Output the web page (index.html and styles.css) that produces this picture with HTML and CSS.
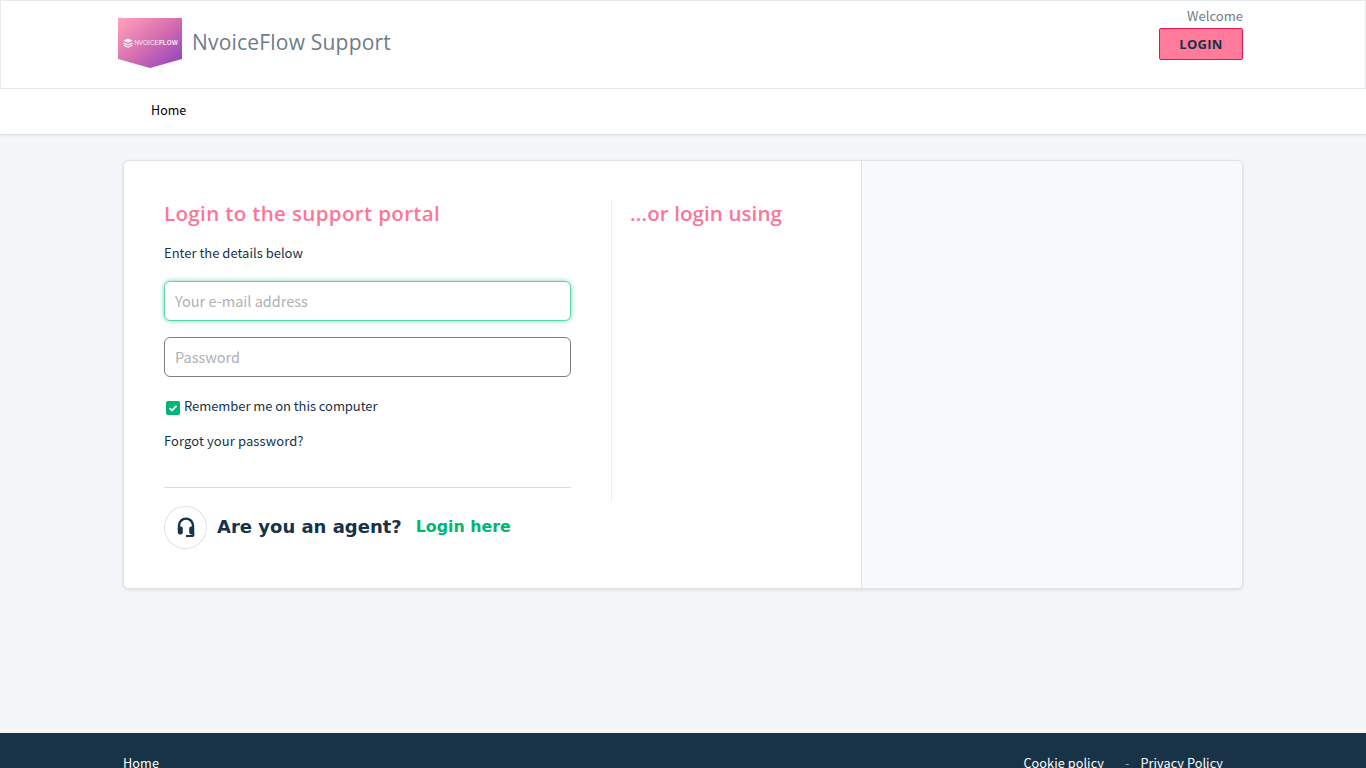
FILE: index.html
```html
<!DOCTYPE html>
<html lang="en">
<head>
<meta charset="utf-8">
<title>NvoiceFlow Support</title>
<link rel="stylesheet" href="styles.css">
</head>
<body>
<header class="topbar">
  <div class="brand">
    <div class="logo">
      <svg class="logo-mark" viewBox="0 0 10 10" width="10" height="10" aria-hidden="true">
        <path d="M5 0.5 9.5 2.6 5 4.7 0.5 2.6Z M0.5 4.3 5 6.4 9.5 4.3 9.5 5.4 5 7.5 0.5 5.4Z M0.5 6.6 5 8.7 9.5 6.6 9.5 7.7 5 9.8 0.5 7.7Z" fill="#fff"/>
      </svg>
      <span class="logo-text">NVOICE<b>FLOW</b></span>
    </div>
    <span class="brand-name">NvoiceFlow Support</span>
  </div>
  <div class="account">
    <span class="welcome">Welcome</span>
    <a class="login-btn" href="#">LOGIN</a>
  </div>
</header>
<nav class="navbar"><a href="#">Home</a></nav>
<main class="content">
  <section class="card">
    <div class="card-main">
      <div class="columns">
        <div class="login-col">
          <h2>Login to the support portal</h2>
          <p class="hint">Enter the details below</p>
          <input class="field focus" type="text" placeholder="Your e-mail address">
          <input class="field" type="password" placeholder="Password">
          <label class="remember">
            <span class="check"><svg viewBox="0 0 14 14" width="14" height="14" aria-hidden="true"><path d="M3.6 7.2 6 9.5 10.5 4.9" fill="none" stroke="#fff" stroke-width="1.8"/></svg></span>
            Remember me on this computer
          </label>
          <a class="forgot" href="#">Forgot your password?</a>
        </div>
        <div class="social-col">
          <h2 class="alt">...or login using</h2>
        </div>
      </div>
      <div class="agent">
        <div class="agent-divider"></div>
        <div class="agent-row">
          <span class="agent-icon">
            <svg viewBox="0 0 18 21" width="18" height="21" aria-hidden="true">
              <path d="M2 12.5V8.6a7 7 0 0 1 14 0v3.9" fill="none" stroke="#183247" stroke-width="2.4"/>
              <rect x="0.8" y="9.6" width="5" height="7.8" rx="1.8" fill="#183247"/>
              <rect x="12.2" y="9.6" width="5" height="7.8" rx="1.8" fill="#183247"/>
              <path d="M16.4 16v1.4a1.6 1.6 0 0 1-1.6 1.6H9" fill="none" stroke="#183247" stroke-width="2"/>
            </svg>
          </span>
          <span class="agent-q">Are you an agent?</span>
          <a class="agent-link" href="#">Login here</a>
        </div>
      </div>
    </div>
    <aside class="card-side"></aside>
  </section>
</main>
<footer class="footer">
  <a href="#">Home</a>
  <div class="footer-right">
    <a href="#">Cookie policy</a>
    <span class="sep">-</span>
    <a href="#">Privacy Policy</a>
  </div>
</footer>
</body>
</html>
```
FILE: styles.css
```css
* { box-sizing: border-box; }
html, body { margin: 0; padding: 0; }
body {
  background: #f3f5f7;
  color: #183247;
  font-family: "Noto Sans CJK SC", "Open Sans", sans-serif;
  font-size: 13px;
  letter-spacing: .04px;
}
a { color: inherit; text-decoration: none; }

.topbar {
  height: 89px;
  background: #fff;
  border: 1px solid #e6eaee;
  padding: 5px 122px 0 117px;
  display: flex;
  justify-content: space-between;
}
.brand { display: flex; align-items: flex-start; gap: 10px; margin-top: 12px; }
.logo {
  width: 64px;
  height: 50px;
  background: linear-gradient(140deg, #ff9dbb 5%, #d56eb0 50%, #8a3fc0 100%);
  clip-path: polygon(0 0, 100% 0, 100% 82%, 50% 100%, 0 82%);
  display: flex;
  align-items: center;
  justify-content: center;
  gap: 1px;
  padding: 0 4px 0 5px;
  color: #fff;
}
.logo-mark { flex: none; }
.logo-text {
  font-family: "Liberation Sans", sans-serif;
  font-size: 6.4px;
  line-height: 10px;
  white-space: nowrap;
  opacity: .85;
}
.logo-text b { font-weight: 700; }
.brand-name {
  font-family: "Open Sans", "Inter", sans-serif;
  font-size: 21px;
  line-height: 30px;
  margin-top: 9px;
  color: #6f7c87;
  letter-spacing: .2px;
}
.account { display: flex; flex-direction: column; align-items: flex-end; }
.welcome { line-height: 20px; color: #6f7c87; }
.login-btn {
  width: 84px;
  height: 32px;
  margin-top: 2px;
  background: #ff7a9b;
  border: 1px solid #e0164e;
  border-radius: 2px;
  display: flex;
  align-items: center;
  justify-content: center;
  font-family: "Open Sans", sans-serif;
  font-size: 13px;
  font-weight: 700;
  letter-spacing: .3px;
  color: #183247;
}

.navbar {
  height: 46px;
  background: #fff;
  border-bottom: 1px solid #dfe3e8;
  box-shadow: 0 1px 2px rgba(24, 50, 71, .06);
  padding: 0 0 4px 151px;
  display: flex;
  align-items: center;
  color: #000;
  font-size: 12.5px;
}

.content { padding: 25px 123px 0; height: 598px; }
.card {
  height: 429px;
  background: #fff;
  border: 1px solid #dfe3e8;
  border-radius: 6px;
  box-shadow: 0 1px 3px rgba(24, 50, 71, .12);
  display: flex;
  overflow: hidden;
}
.card-main { width: 738px; padding: 38px 0 0 40px; border-right: 1px solid #dfe3e8; }
.card-side { flex: 1; background: #f8f9fb; }
.columns { display: flex; height: 303px; }
.login-col { width: 448px; padding-right: 40px; border-right: 1px solid #ebeff3; background-clip: content-box; }
.social-col { padding-left: 18px; }
h2 {
  margin: 0;
  font-family: "Open Sans", "Inter", sans-serif;
  font-size: 20.5px;
  line-height: 28px;
  font-weight: 600;
  color: #ff7597;
  letter-spacing: .36px;
}
h2.alt { letter-spacing: .1px; }
.hint { margin: 16px 0 0; line-height: 20px; letter-spacing: 0; }
.field {
  display: block;
  width: 407px;
  height: 40px;
  padding: 0 10px 2px;
  background: #fff;
  border: 1px solid #7b7f84;
  border-radius: 6px;
  font-family: inherit;
  font-size: 14.5px;
  color: #183247;
  outline: none;
}
.field::placeholder { color: #aeb1b5; opacity: 1; }
.field.focus {
  margin-top: 18px;
  margin-bottom: 16px;
  border-color: #5dd6a6;
  box-shadow: 0 0 5px rgba(0, 182, 122, .55);
}
.remember { display: flex; align-items: center; gap: 4px; margin: 19px 0 0 2px; line-height: 20px; letter-spacing: -.06px; }
.check {
  width: 14px;
  height: 14px;
  margin-top: 3px;
  background: #00b674;
  border-radius: 2px;
  display: block;
}
.check svg { display: block; }
.forgot { display: block; margin-top: 15px; line-height: 20px; letter-spacing: .1px; }

.agent-divider { width: 407px; height: 1px; margin-top: -15px; background: #dadde1; position: relative; }
.agent-row { display: flex; align-items: center; margin-top: 18px; }
.agent-icon {
  width: 43px;
  height: 42.5px;
  border: 1px solid #dfe3e8;
  border-radius: 50%;
  display: flex;
  align-items: center;
  justify-content: center;
  margin-right: 10px;
}
.agent-q, .agent-link {
  font-family: "DejaVu Sans", sans-serif;
  font-weight: 700;
  font-size: 18px;
  line-height: 24px;
  letter-spacing: 0;
}
.agent-link { font-size: 15.8px; color: #00b674; margin-left: 14px; }

.footer {
  height: 70px;
  background: #183247;
  color: #fff;
  padding: 20px 143px 0 123px;
  display: flex;
  justify-content: space-between;
  font-size: 12.7px;
  line-height: 20px;
  letter-spacing: .07px;
}
.footer-right { display: flex; }
.sep { margin: 0 11px 0 21px; color: #9aa7b2; }
```
